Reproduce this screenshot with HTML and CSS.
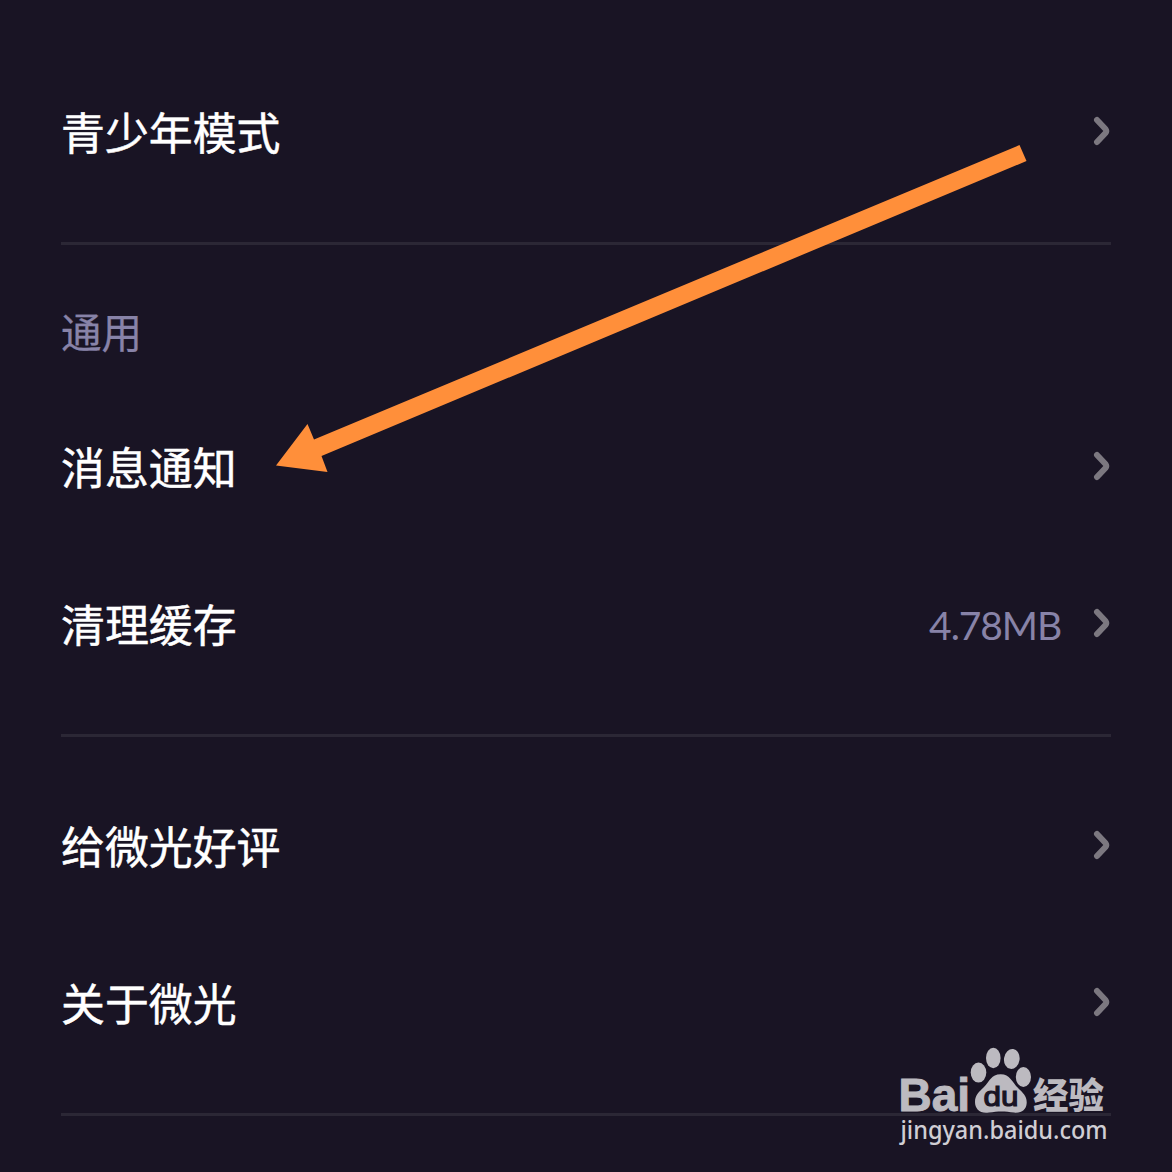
FILE: index.html
```html
<!DOCTYPE html>
<html lang="zh-CN">
<head>
<meta charset="utf-8">
<title>设置</title>
<link rel="stylesheet" href="styles.css">
</head>
<body>
<main class="settings">
  <section class="group">
    <div class="row"><span class="label">青少年模式</span><svg class="chevron" viewBox="0 0 18 30"><path d="M4 4 L12.500 13 Q14 15 12.500 17 L4 26"/></svg></div>
  </section>
  <section class="group">
    <h2 class="heading">通用</h2>
    <div class="row"><span class="label">消息通知</span><svg class="chevron" viewBox="0 0 18 30"><path d="M4 4 L12.500 13 Q14 15 12.500 17 L4 26"/></svg></div>
    <div class="row"><span class="label">清理缓存</span><span class="value">4.78MB</span><svg class="chevron" viewBox="0 0 18 30"><path d="M4 4 L12.500 13 Q14 15 12.500 17 L4 26"/></svg></div>
  </section>
  <section class="group">
    <div class="row"><span class="label">给微光好评</span><svg class="chevron" viewBox="0 0 18 30"><path d="M4 4 L12.500 13 Q14 15 12.500 17 L4 26"/></svg></div>
    <div class="row"><span class="label">关于微光</span><svg class="chevron" viewBox="0 0 18 30"><path d="M4 4 L12.500 13 Q14 15 12.500 17 L4 26"/></svg></div>
  </section>
</main>
<svg class="arrow" viewBox="270 140 760 340"><path d="M276 465.5 L307.5 424 L314 439.500 L1019.500 145 L1026.500 161 L321.500 456 L327.500 472 Z"/></svg>
<svg class="watermark" viewBox="890 1040 230 112">
  <text class="brand" x="898.500" y="1111" textLength="71.500" lengthAdjust="spacingAndGlyphs">Bai</text>
  <ellipse cx="978.5" cy="1072.600" rx="7.800" ry="10"/>
  <ellipse cx="993.3" cy="1058" rx="7.300" ry="10.200"/>
  <ellipse cx="1011.800" cy="1059" rx="7.800" ry="10" transform="rotate(8 1012 1059)"/>
  <ellipse cx="1023.400" cy="1077" rx="7.600" ry="10"/>
  <path d="M1000.700 1074.200 C1010 1074.200 1012 1082 1018 1088 C1023 1093 1027 1096 1026.700 1103 C1026.300 1110 1021 1113.500 1014 1112.500 C1005 1111 998 1111 989 1112.500 C980 1114 975 1109 975 1102 C975 1095 979 1092 984 1087 C990 1081 991 1074.200 1000.700 1074.200Z"/>
  <text class="du" x="983.500" y="1105.500" textLength="35" lengthAdjust="spacingAndGlyphs">du</text>
  <text class="jingyan" x="1033" y="1109" textLength="71" lengthAdjust="spacingAndGlyphs">经验</text>
  <text class="site" x="900.500" y="1139" textLength="207" lengthAdjust="spacingAndGlyphs">jingyan.baidu.com</text>
</svg>
</body>
</html>
```
FILE: styles.css
```css
* {
  box-sizing: border-box;
}

body {
  margin: 0;
  width: 1172px;
  height: 1172px;
  position: relative;
  overflow: hidden;
  background: #191424;
  font-family: "Noto Sans CJK SC", sans-serif;
}

.settings {
  padding: 21px 61px 0;
}

.group {
  padding: 32px 0;
  border-bottom: 3px solid #2b2735;
}

.group + .group {
  padding-top: 33px;
}

.group:last-child {
  padding-top: 30px;
}

.heading {
  margin: 0;
  height: 110px;
  padding-bottom: 5px;
  display: flex;
  align-items: center;
  font-size: 40.5px;
  font-weight: 400;
  line-height: 60px;
  color: #8883a8;
  -webkit-text-stroke: 0.3px #8883a8;
}

.row {
  height: 157px;
  display: flex;
  align-items: center;
}

.label {
  flex: 1;
  padding-bottom: 2px;
  font-size: 43.9px;
  line-height: 64px;
  color: #fff;
  -webkit-text-stroke: 0.5px #fff;
}

.value {
  margin-right: 32px;
  padding-top: 2px;
  font-family: Lato, "Noto Sans", sans-serif;
  font-size: 39px;
  letter-spacing: -1.1px;
  line-height: 56px;
  color: #8883a8;
}

.chevron {
  width: 18px;
  height: 30px;
  position: relative;
  top: -0.5px;
}

.chevron path {
  fill: none;
  stroke: #7c7880;
  stroke-width: 6;
  stroke-linecap: round;
  stroke-linejoin: round;
}

.arrow {
  position: absolute;
  left: 270px;
  top: 140px;
  width: 760px;
  height: 340px;
  fill: #ff8f3a;
}

.watermark {
  position: absolute;
  left: 890px;
  top: 1040px;
  width: 230px;
  height: 112px;
  fill: #bcbac0;
}

.brand {
  font: 700 47px "Liberation Sans", sans-serif;
  stroke: #bcbac0;
  stroke-width: 1;
}

.du {
  font: 400 28px "Liberation Sans", sans-serif;
  fill: #191424;
  stroke: #191424;
  stroke-width: 1.2;
}

.jingyan {
  font: 900 36px "Noto Sans CJK SC", sans-serif;
}

.site {
  font: 500 25px "Noto Sans", sans-serif;
  fill: #d0ced4;
}
```
